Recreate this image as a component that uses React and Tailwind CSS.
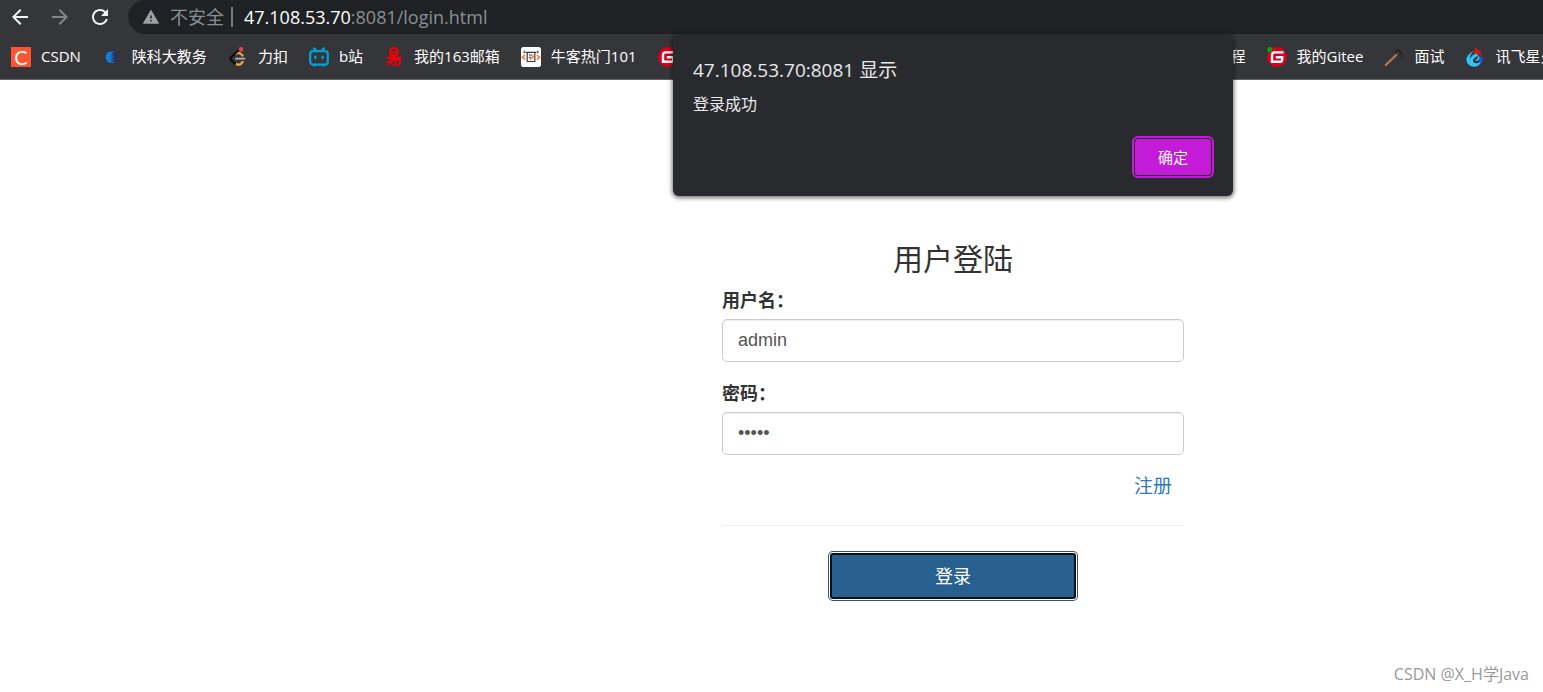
import React, { useState } from 'react';
import { MdArrowBack, MdArrowForward, MdRefresh, MdWarning } from 'react-icons/md';

const CsdnIcon = () => (
    <span className="flex size-5 items-center justify-center bg-[#fc5531] font-['Lato','Noto_Sans_CJK_SC',sans-serif] text-xl leading-5 text-white">C</span>
);

const SchoolIcon = () => (
    <svg viewBox="0 0 20 20" className="size-5">
        <circle cx="10" cy="10" r="7" fill="#2f3050" />
        <path d="M9.500 4.200a5.800 5.800 0 0 0 0 11.800z" fill="#0a8ae6" />
        <path d="M5 7.500h5M4.500 10h5M5 12.500h5" stroke="#1560b0" strokeWidth="0.700" />
        <path d="M9.500 4.800h3M9.500 7.600h2M9.500 10.200h2.500M9.500 12.800h2M9.500 15.400h3" stroke="#1272cc" strokeWidth="1.200" />
    </svg>
);

const LeetCodeIcon = () => (
    <svg viewBox="0 0 20 20" className="size-5" fill="none" strokeLinecap="round">
        <path d="M8.500 6.800q2-1.800 4.200 0l2 1.800" stroke="#f0a33a" strokeWidth="2.200" />
        <path d="M8.200 17q2.400 1.600 4.400 0l2-2" stroke="#f0a33a" strokeWidth="2.400" />
        <path d="M11.800 2.200 3 10.200q-1.200 1.300 0 2.800l4 3.800" stroke="#0b0b0b" strokeWidth="2.200" />
        <path d="M8 11.700h8.500" stroke="#b3b3b3" strokeWidth="1.800" />
        <circle cx="13" cy="2.400" r="2.300" fill="#d9494c" />
    </svg>
);

const BilibiliIcon = () => (
    <svg viewBox="0 0 20 20" className="size-5" fill="none" stroke="#00a1d6" strokeWidth="2.2" strokeLinecap="round">
        <rect x="1.2" y="4.2" width="17.6" height="13.4" rx="2.8" />
        <path d="m5 1.3 2.4 2.4M15 1.3l-2.4 2.4" />
        <path d="M6.4 9.6v1.6M13.6 9.6v1.6" />
        <path d="M5 18.4h1M14 18.4h1" />
    </svg>
);

const MailIcon = () => (
    <svg viewBox="0 0 20 20" className="size-5" fill="none" stroke="#f00008" strokeLinecap="round">
        <circle cx="10" cy="5" r="3.8" strokeWidth="2.2" />
        <path d="M8 5.2h4.2M12 3.6v1.2M8.6 6.8h3.2" strokeWidth="1.3" />
        <path d="M3 10.6h13.8M6.6 9v3.4M3.4 15.5q3.2-.8 4.8-3h7.8q.6 4.2-1.8 6l-1.6-.7" strokeWidth="1.9" />
        <path d="M9.6 13q-1.4 3.2-5.2 5M12.8 13q-1 3.6-4.2 5.6" strokeWidth="1.6" />
    </svg>
);

const NowcoderIcon = () => (
    <svg viewBox="0 0 20 20" className="size-5" fill="none">
        <rect width="20" height="20" rx="2.5" fill="#fff" />
        <path d="M3.2 3.8v2.4M16.8 3.8v2.4M6.2 5.3v9.2h7.6V5.3zM4.5 5.3h11" stroke="#2f3b4a" strokeWidth="1.2" />
        <path d="M8 8h3.5M8 10.3h2" stroke="#2f3b4a" strokeWidth="1" />
        <path d="M4 8 1.5 10.3 4 12.6M16 8l2.5 2.3L16 12.6M9 12.8l4.5-4.5" stroke="#f57c1f" strokeWidth="1.6" />
    </svg>
);

const GiteeIcon = ({ online }) => (
    <svg viewBox="0 0 20 20" className="size-5" fill="none">
        <circle cx="10" cy="10" r="10" fill="#d9001b" />
        <path d="M16.500 5.400H7.600Q5 5.400 5 8v6.800h7.600q2.600 0 2.600-2.400v-2.200H8.800" stroke="#fff" strokeWidth="2.400" />
        {online && <circle cx="2.8" cy="2.6" r="2.6" fill="#0aa50a" />}
    </svg>
);

const PickaxeIcon = () => (
    <svg viewBox="0 0 20 20" className="size-5" fill="none" strokeLinecap="round">
        <path d="M1.8 18 13.5 6.8" stroke="#b9754c" strokeWidth="2.2" />
        <path d="m11.6 1.8 6.6 5v4.4M11.4 5.2l3-2.6 3.2 3.2-2.2 2.4z" stroke="#252525" strokeWidth="1.1" />
    </svg>
);

const SparkIcon = () => (
    <svg viewBox="0 0 20 20" className="size-5">
        <path d="M9.500 0.500q6.500 3 7.900 9.400l-3-3-5.200-.4q1-3 .3-6z" fill="#e8110f" />
        <path d="M17.400 9.500q1.200 4.500-1.600 7.700-2.600 2.600-6.400 2.300 5-2.500 5-8.500z" fill="#1b52d8" />
        <path d="M9.200 3.500Q1 8 1.400 13q.8 6.400 8 6.700 5-.5 6.200-5-3.400 2.600-6.400 1-2.600-2 .2-4.400l4-3.300-2.600-1.600q-5.400 2.600-6 6.200-.6-4.600 4.400-9.100z" fill="#35c1f3" />
        <path d="M13.400 8q2.400 3.400-.4 5.600-1.600.8-2.600 0 2.800-2 3-5.600z" fill="#35c1f3" />
    </svg>
);

const BOOKMARKS = [
    { label: 'CSDN', icon: <CsdnIcon /> },
    { label: '陕科大教务', icon: <SchoolIcon /> },
    { label: '力扣', icon: <LeetCodeIcon /> },
    { label: 'b站', icon: <BilibiliIcon /> },
    { label: '我的163邮箱', icon: <MailIcon /> },
    { label: '牛客热门101', icon: <NowcoderIcon /> },
    { label: '程', icon: <GiteeIcon />, wide: true },
    { label: '我的Gitee', icon: <GiteeIcon online /> },
    { label: '面试', icon: <PickaxeIcon /> },
    { label: '讯飞星火', icon: <SparkIcon /> },
];

const BrowserBar = () => (
    <header className="overflow-hidden border-b border-[#5f6063] bg-[#35363a]">
        <div className="flex h-[34px] items-center gap-4 pl-2">
            <button type="button" aria-label="后退" className="text-[#f1f3f4]"><MdArrowBack className="size-6" /></button>
            <button type="button" aria-label="前进" className="text-[#85868a]"><MdArrowForward className="size-6" /></button>
            <button type="button" aria-label="刷新" className="text-[#f1f3f4]"><MdRefresh className="size-6" /></button>
            <div className="flex h-full flex-1 items-center rounded-l-full bg-[#202124] pl-[14px] text-lg text-[#8b8f94]">
                <MdWarning className="size-[18px] text-[#9aa0a6]" />
                <span className="ml-[10px]">不安全</span>
                <span className="mx-[7px] h-5 w-0.5 bg-[#77797d]" />
                <span className="ml-1"><span className="text-white">47.108.53.70</span>:8081/login.html</span>
            </div>
        </div>
        <nav className="flex h-[45px] items-center gap-[21px] pl-[11px] text-[15px] whitespace-nowrap text-white">
            {BOOKMARKS.map((b) => (
                <a key={b.label} href="#" className={`flex shrink-0 items-center gap-[10px] ${b.wide ? 'w-[588px] justify-between' : ''}`}>
                    {b.icon}
                    <span>{b.label}</span>
                </a>
            ))}
        </nav>
    </header>
);

const AlertDialog = ({ onClose }) => (
    <div role="alertdialog" aria-labelledby="alert-title" className="w-[560px] rounded-md bg-[#292a2d] px-5 pt-[22px] pb-[21px] text-[#e8eaed] shadow-[0_1px_4px_1px_rgba(0,0,0,0.55)]">
        <h2 id="alert-title" className="text-[19px] leading-[26px]">47.108.53.70:8081 显示</h2>
        <p className="mt-[9px] text-base leading-6">登录成功</p>
        <div className="mt-[23px] flex justify-end pr-0.5">
            <button type="button" onClick={onClose} className="h-9 w-[76px] rounded-[3px] bg-[#c41bd8] text-[15px] text-white outline-2 outline-offset-1 outline-[#c41bd8]">
                确定
            </button>
        </div>
    </div>
);

const Field = ({ id, label, type, value, onChange }) => (
    <div className="mb-[19px]">
        <label htmlFor={id} className="mb-1.5 block text-lg leading-[25px] font-bold">{label}</label>
        <input
            id={id}
            type={type}
            value={value}
            onChange={(e) => onChange(e.target.value)}
            className="block h-[43px] w-full rounded-[5px] border border-[#ccc] bg-white px-[15px] font-['Liberation_Sans','Noto_Sans_CJK_SC',sans-serif] text-lg text-[#555] shadow-[inset_0_1px_1px_rgba(0,0,0,0.075)] outline-none"
        />
    </div>
);

export default function App() {
    const [username, setUsername] = useState('admin');
    const [password, setPassword] = useState('admin');
    const [showAlert, setShowAlert] = useState(true);

    const handleSubmit = (e) => {
        e.preventDefault();
        setShowAlert(true);
    };

    return (
        <div className="relative flex min-h-screen flex-col overflow-hidden bg-white font-['Open_Sans','Noto_Sans_CJK_SC',sans-serif] text-[#333]">
            <BrowserBar />

            {/* Alert hangs from the address bar, centred over the form */}
            {showAlert && (
                <div className="absolute inset-x-0 top-[35px] flex justify-center pl-[363px]">
                    <AlertDialog onClose={() => setShowAlert(false)} />
                </div>
            )}

            <main className="flex justify-center pt-[162px] pl-[363px]">
                <form onSubmit={handleSubmit} className="w-[462px]">
                    <h3 className="mb-[13px] text-center text-3xl leading-[33px]">用户登陆</h3>
                    <Field id="username" label="用户名：" type="text" value={username} onChange={setUsername} />
                    <Field id="password" label="密码：" type="password" value={password} onChange={setPassword} />
                    <div className="flex justify-end pr-3 text-[19px] leading-6">
                        <a href="#" className="text-[#337ab7]">注册</a>
                    </div>
                    <hr className="my-[27px] border-[#eee]" />
                    <button type="submit" className="mx-auto block h-[46px] w-[246px] rounded-[3px] border-2 border-[#101010] bg-[#286090] text-lg leading-6 text-white shadow-[0_0_0_1px_#fff,0_0_0_2px_#2a5578] outline-none">
                        登录
                    </button>
                </form>
            </main>

            <footer className="mt-auto pr-[14px] pb-1.5 text-right text-base leading-6 text-[#999]">CSDN @X_H学Java</footer>
        </div>
    );
}
